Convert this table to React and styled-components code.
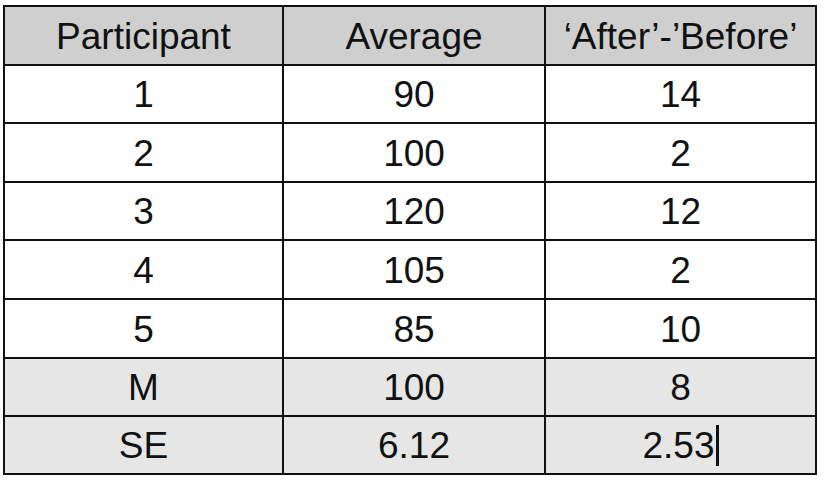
import React from "react";
import styled, { createGlobalStyle } from "styled-components";

const Global = createGlobalStyle`
  html, body { margin: 0; padding: 0; background: #ffffff; }
  body { font-family: "Liberation Sans", Arial, sans-serif; }
`;

const Page = styled.div`
  padding: 5px 0 0 3px;
`;

const Table = styled.div`
  display: grid;
  width: 814px;
  box-sizing: border-box;
  grid-template-columns: 277px 260px 269px;
  grid-template-rows: 57px 56px 57px 56px 57px 57px 56px 56px;
  gap: 2px;
  padding: 2px;
  background: #111111;
`;

const Cell = styled.div`
  display: flex;
  align-items: center;
  justify-content: center;
  background: ${(p) =>
    p.$kind === "head" ? "#cfcfcf" : p.$kind === "stat" ? "#e6e6e6" : "#ffffff"};
  color: #111111;
  font-size: 37px;
  line-height: 1;
  padding-top: 1px;
`;

const Caret = styled.span`
  display: inline-block;
  width: 3px;
  height: 41px;
  background: #111111;
  margin-left: 1px;
`;

const header = ["Participant", "Average", "\u2018After\u2019-\u2019Before\u2019"];
const rows = [
  ["1", "90", "14"],
  ["2", "100", "2"],
  ["3", "120", "12"],
  ["4", "105", "2"],
  ["5", "85", "10"],
];
const stats = [
  ["M", "100", "8"],
  ["SE", "6.12", "2.53"],
];

export default function App() {
  return (
    <>
      <Global />
      <Page>
        <Table>
          {header.map((h) => (
            <Cell key={h} $kind="head">{h}</Cell>
          ))}
          {rows.map((r, i) =>
            r.map((c, j) => <Cell key={`r${i}-${j}`}>{c}</Cell>)
          )}
          {stats.map((r, i) =>
            r.map((c, j) => (
              <Cell key={`s${i}-${j}`} $kind="stat">
                {c}
                {i === 1 && j === 2 ? <Caret /> : null}
              </Cell>
            ))
          )}
        </Table>
      </Page>
    </>
  );
}
